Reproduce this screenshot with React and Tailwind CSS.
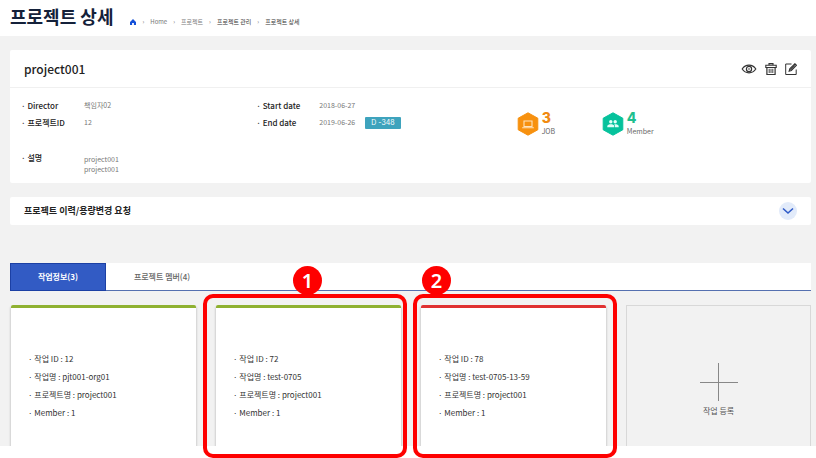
import React from "react";

const crumbs = [
  { label: "Home", tone: "text-[#777777]" },
  { label: "프로젝트", tone: "text-[#777777]" },
  { label: "프로젝트 관리", tone: "text-[#333333]" },
  { label: "프로젝트 상세", tone: "text-[#333333]" },
];

const jobs = [
  { id: "12", name: "pjt001-org01", project: "project001", members: 1, bar: "border-[#8fb131]" },
  {
    id: "72", name: "test-0705", project: "project001", members: 1, bar: "border-[#8fb131]",
    mark: "1", frame: "-left-[13px] -right-[6px]", dot: "left-[77px]",
  },
  {
    id: "78", name: "test-0705-13-59", project: "project001", members: 1, bar: "border-[#e03131]",
    mark: "2", frame: "-left-2 -right-[11px]", dot: "left-px",
  },
];

function HomeIcon() {
  return (
    <svg viewBox="0 0 12 12" className="size-[6px]" fill="#1450d8" aria-hidden="true">
      <path d="M6 0 12 6v6H7.800V8H4.200v4H0V6z" />
    </svg>
  );
}

function EyeIcon() {
  return (
    <svg viewBox="0 0 16 12" className="h-3 w-4" fill="none" stroke="#333333" aria-hidden="true">
      <path d="M1.200 6C3 3.200 5.400 2.200 8 2.200S13 3.200 14.800 6C13 8.800 10.600 9.800 8 9.800S3 8.800 1.200 6z" strokeWidth="1.200" />
      <circle cx="8" cy="6" r="2.600" strokeWidth="1.200" />
      <circle cx="8" cy="6" r=".8" fill="#333333" stroke="none" />
    </svg>
  );
}

function TrashIcon() {
  return (
    <svg viewBox="0 0 12 12" className="size-3" fill="none" stroke="#333333" aria-hidden="true">
      <path d="M4 2V.6h4V2M.8 4.500V2.300h10.400v2.200z" strokeWidth="1.100" />
      <path d="M1.900 4.500v7h8.200v-7" strokeWidth="1.200" />
      <path d="M4.200 5.800v4.200M6 5.800v4.200M7.800 5.800v4.200" strokeWidth=".9" />
    </svg>
  );
}

function EditIcon() {
  return (
    <svg viewBox="0 0 12 12" className="size-3" fill="none" stroke="#333333" aria-hidden="true">
      <path d="M6.500 1H.7v10.500h10.500V6.500" strokeWidth="1" />
      <path d="M4.200 8.200l.6-2.300L9.900.8l1.500 1.500-5.100 5.200z" strokeWidth="1.200" />
      <path d="M5.400 6.800l4.400-4.400" strokeWidth="1.100" />
    </svg>
  );
}

function JobHexagon() {
  return (
    <svg viewBox="0 0 22 24" className="h-6 w-[22px]" aria-hidden="true">
      <path d="M11 .8 20.800 6.200v11.600L11 23.200 1.200 17.800V6.200z" fill="#f7910f" stroke="#f7910f" strokeLinejoin="round" />
      <path d="M7 9h8v5.500H7zM5.200 15.800h11.600" fill="none" stroke="#ffe3bd" strokeWidth="1.100" />
    </svg>
  );
}

function MemberHexagon() {
  return (
    <svg viewBox="0 0 22 24" className="h-6 w-[22px]" aria-hidden="true">
      <path d="M11 .8 20.800 6.200v11.600L11 23.200 1.200 17.800V6.200z" fill="#06c29c" stroke="#06c29c" strokeLinejoin="round" />
      <g fill="#e2fff8">
        <circle cx="8.800" cy="9.800" r="1.700" />
        <circle cx="13.200" cy="9.800" r="1.700" />
        <path d="M5.300 15.300v-1.100c0-1.300 2-1.900 3.500-1.900s3.500.6 3.500 1.900v1.100zM13 15.300v-1.100c0-.7-.3-1.300-.8-1.800 1.700-.3 4.500.3 4.500 1.800v1.100z" />
      </g>
    </svg>
  );
}

function Field({ label, children }) {
  return (
    <div className="grid grid-cols-[63px_1fr] items-center">
      <dt className="font-medium text-[#222222]">· {label}</dt>
      <dd className="flex items-center gap-[10px] text-[7px] text-[#777777]">{children}</dd>
    </div>
  );
}

function Stat({ icon, value, label, tone }) {
  return (
    <div className="flex items-center gap-[3px] self-start pt-[14px]">
      {icon}
      <div>
        <p className={`font-[Inter,sans-serif] text-[14px] leading-[14px] font-extrabold ${tone}`}>{value}</p>
        <p className="pt-px text-[7px] leading-[10px] text-[#666666]">{label}</p>
      </div>
    </div>
  );
}

function JobCard({ job }) {
  return (
    <li className="relative">
      <div className={`rounded-t-xs border-t-3 bg-white px-[17px] pt-[42px] pb-6 shadow-[0_2px_2px_1px_rgba(0,0,0,0.14)] [clip-path:inset(0_-3px_0_-3px)] ${job.bar}`}>
        <ul className="text-[8px] leading-[18px] text-[#333333]">
          <li>· 작업 ID : {job.id}</li>
          <li>· 작업명 : {job.name}</li>
          <li>· 프로젝트명 : {job.project}</li>
          <li>· Member : {job.members}</li>
        </ul>
      </div>
      {job.mark && (
        <>
          <div className={`pointer-events-none absolute -top-[11px] -bottom-3 rounded-[10px] border-4 border-[#fe0000] ${job.frame}`} />
          <span className={`absolute -top-[39px] flex size-[29px] items-center justify-center rounded-full bg-[#fe0000] font-['Noto_Sans',sans-serif] text-[20px] leading-none font-semibold text-white ${job.dot}`}>
            {job.mark}
          </span>
        </>
      )}
    </li>
  );
}

export default function App() {
  return (
    <div className="bg-white pb-3 font-['Noto_Sans_CJK_KR',sans-serif]">
      <header className="flex h-9 items-center gap-[17px] px-[10px]">
        <h1 className="pb-1 text-[18px] leading-6 font-bold text-[#14213a]">프로젝트 상세</h1>
        <nav aria-label="breadcrumb" className="pt-2">
          <ol className="flex items-center text-[6px] leading-[10px]">
            <li><a href="#home" aria-label="홈"><HomeIcon /></a></li>
            {crumbs.map((c) => (
              <li key={c.label} className="flex items-center">
                <span className="px-[6px] text-[#777777]">›</span>
                <a href="#crumb" className={c.tone}>{c.label}</a>
              </li>
            ))}
          </ol>
        </nav>
      </header>

      <main className="bg-[#f2f2f2] pt-[14px] pr-[5px] pl-[10px]">
        <section className="rounded-xs bg-white">
          <div className="flex h-[38px] items-center justify-between border-b border-[#f0f0f0] px-[14px]">
            <h2 className="text-[12px] font-medium text-[#222222]">project001</h2>
            <div className="flex items-center gap-2">
              <button type="button" aria-label="보기"><EyeIcon /></button>
              <button type="button" aria-label="삭제"><TrashIcon /></button>
              <button type="button" aria-label="수정"><EditIcon /></button>
            </div>
          </div>
          <div className="grid grid-cols-[235fr_260fr_85fr_198fr] px-[11px] pt-[9px] text-[8px] leading-[17px]">
            <dl>
              <Field label="Director">책임자02</Field>
              <Field label="프로젝트ID">12</Field>
            </dl>
            <dl>
              <Field label="Start date">2018-06-27</Field>
              <Field label="End date">
                2019-06-26
                <span className="rounded-[1px] bg-[#3ea3bd] px-[6px] font-[Inter,sans-serif] text-[7px] leading-3 text-white">D -348</span>
              </Field>
            </dl>
            <Stat icon={<JobHexagon />} value="3" label="JOB" tone="text-[#f08a10]" />
            <Stat icon={<MemberHexagon />} value="4" label="Member" tone="text-[#1fbf8f]" />
          </div>
          <dl className="grid grid-cols-[63px_1fr] px-[11px] pt-[13px] pb-[9px] text-[8px] leading-[17px]">
            <dt className="font-medium text-[#222222]">· 설명</dt>
            <dd className="pt-[5px] text-[7px] leading-[10px] text-[#777777]">project001<br />project001</dd>
          </dl>
        </section>

        <section className="mt-[14px] flex h-7 items-center justify-between rounded-xs bg-white px-[14px]">
          <h2 className="text-[9px] font-bold text-[#222222]">프로젝트 이력/용량변경 요청</h2>
          <button type="button" aria-label="펼치기" className="flex size-[18px] items-center justify-center rounded-full bg-[#e2ebfa]">
            <svg viewBox="0 0 12 8" className="h-2 w-3" fill="none" stroke="#2f5bc8" strokeWidth="1.600" aria-hidden="true">
              <path d="M1 1.500 6 6l5-4.500" />
            </svg>
          </button>
        </section>

        <div role="tablist" className="mt-[38px] flex h-7 border-b border-[#5570b0] bg-white text-[8px]">
          <button type="button" role="tab" aria-selected="true" className="-mb-px w-24 border border-[#1c40a4] bg-[#325bc4] font-bold text-white">
            작업정보(3)
          </button>
          <button type="button" role="tab" aria-selected="false" className="w-28 font-medium text-[#666666]">
            프로젝트 멤버(4)
          </button>
        </div>

        <ul className="mt-[14px] grid grid-cols-4 gap-5 pl-px">
          {jobs.map((job) => <JobCard key={job.id} job={job} />)}
          <li className="flex">
            <button type="button" className="flex flex-1 flex-col items-center justify-end gap-1 border border-b-0 border-[#d8d8d8] pb-[29px] text-[8px] leading-3 text-[#555555]">
              <svg viewBox="0 0 38 38" className="size-[38px]" stroke="#888888" aria-hidden="true">
                <path d="M18.500 0v38M0 19.500h38" />
              </svg>
              작업 등록
            </button>
          </li>
        </ul>
      </main>
    </div>
  );
}
